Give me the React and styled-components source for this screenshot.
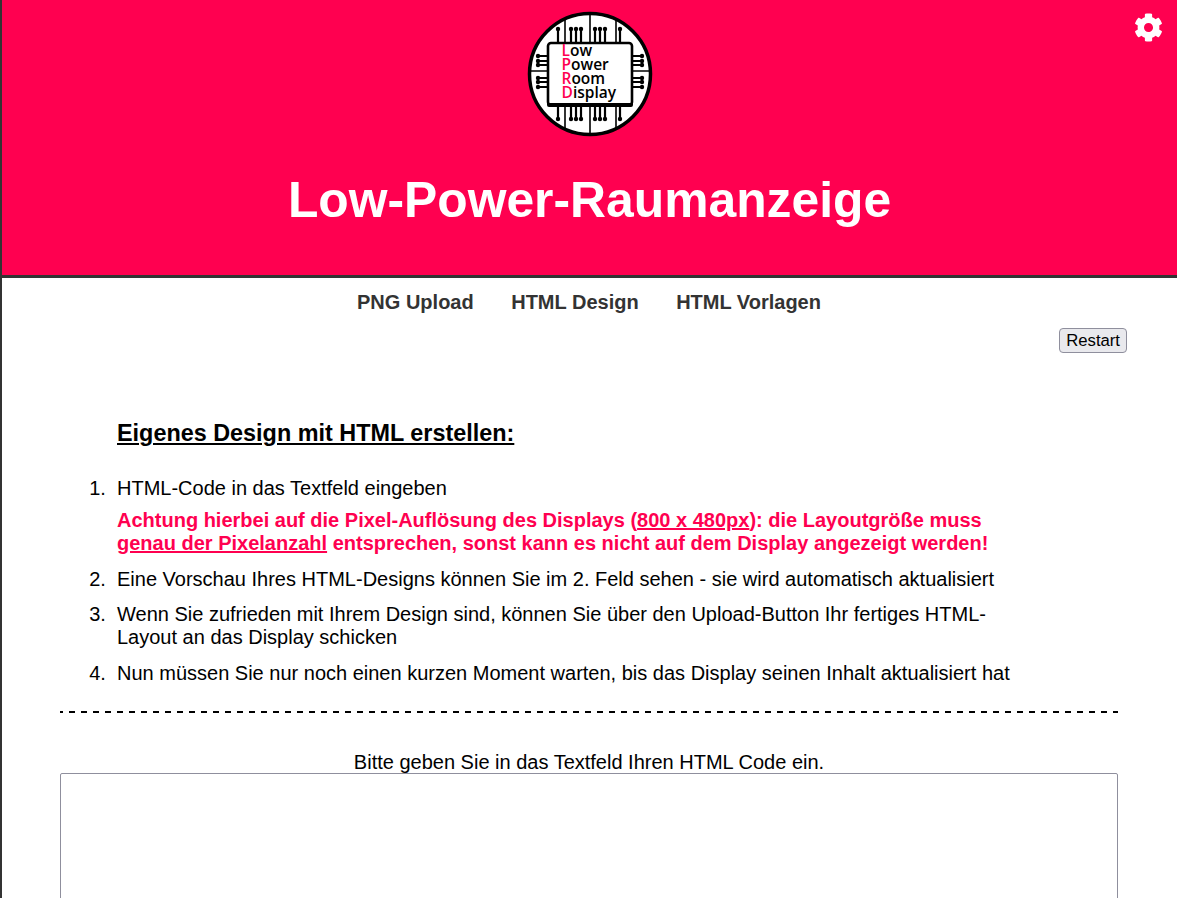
import React from 'react';
import styled, { createGlobalStyle } from 'styled-components';
import { FaCog } from 'react-icons/fa';

const GlobalStyle = createGlobalStyle`
  html, body {
    margin: 0;
    padding: 0;
    height: 100%;
    overflow: hidden;
    background: #fff;
  }
  body {
    font-family: "Liberation Sans", Arial, sans-serif;
    color: #000;
  }
`;

const Page = styled.div`
  border-left: 2px solid #333;
  min-height: 898px;
`;

const Header = styled.header`
  position: relative;
  height: 264px;
  background: #ff0050;
  border-bottom: 3px solid #333;
  display: flex;
  flex-direction: column;
  align-items: center;
  padding-top: 11px;
`;

const LogoWrap = styled.div`
  position: relative;
  width: 126px;
  height: 126px;
  flex: none;
`;

const LogoLabel = styled.div`
  position: absolute;
  left: 35px;
  top: 32px;
  font-family: "Open Sans", "Noto Sans", sans-serif;
  font-size: 15.5px;
  line-height: 14px;
  font-weight: 600;
  color: #000;
  white-space: nowrap;
`;

const LogoInitial = styled.span`
  color: #ff0050;
`;

const Title = styled.h1`
  margin: 36px 0 0;
  font-size: 49.8px;
  line-height: 55px;
  font-weight: bold;
  color: #fff;
`;

const SettingsButton = styled.div`
  position: absolute;
  top: 13px;
  right: 14px;
  color: #fff;
  font-size: 29px;
  line-height: 0;
`;

const Nav = styled.nav`
  display: flex;
  justify-content: center;
  gap: 37.5px;
  padding: 13px 1px 0 0;
`;

const NavLink = styled.a`
  font-size: 20px;
  line-height: 23px;
  font-weight: bold;
  color: #333;
`;

const RestartRow = styled.div`
  display: flex;
  justify-content: flex-end;
  padding: 14px 50px 0 0;
`;

const RestartButton = styled.button`
  font-family: "Liberation Sans", Arial, sans-serif;
  font-size: 16.7px;
  height: 25px;
  padding: 1px 6px;
  color: #000;
  background: #e9e9ed;
  border: 1px solid #8f8f9d;
  border-radius: 4px;
`;

const Content = styled.main`
  margin: 0 59px 0 58px;
`;

const Guide = styled.section`
  padding: 66px 0 14px 57px;
`;

const GuideTitle = styled.h2`
  margin: 0 0 30px;
  font-size: 23.4px;
  line-height: 28px;
  font-weight: bold;
  text-decoration: underline;
`;

const Steps = styled.ol`
  margin: 0;
  padding: 0;
  width: 905px;
  font-size: 20px;
  line-height: 23px;
`;

const Step = styled.li`
  margin-bottom: 12.5px;

  &::marker {
    content: counter(list-item) ".\\00a0\\00a0";
  }
`;

const Warning = styled.div`
  margin-top: 9px;
  color: #ff0050;
  font-weight: bold;
`;

const Divider = styled.hr`
  margin: 0;
  border: 0;
  height: 2px;
  background: linear-gradient(to right, #000 50%, transparent 50%) 9px 0 / 12px 2px repeat-x;
`;

const Prompt = styled.div`
  margin-top: 38px;
  text-align: center;
  font-size: 20px;
  line-height: 22px;
`;

const CodeField = styled.textarea`
  display: block;
  box-sizing: border-box;
  width: 100%;
  height: 400px;
  border: 1px solid #8f8f9d;
  border-radius: 2px;
  padding: 2px;
`;

const pinsTop = [-32, -19, -14, -9, 5, 10, 15, 30];
const pinsSide = [-18, -13, -9, 4, 8, 13];

// Platine mit Leiterbahnen, die Schrift liegt als echter Text darueber
const LogoBoard = () => (
  <svg width="126" height="126" viewBox="-63 -63 126 126">
    <circle cx="0" cy="0" r="60.5" fill="#fff" stroke="#000" strokeWidth="3.5" />
    <g stroke="#000" strokeWidth="1.6" fill="none">
      <path d="M-25 -56V-31M0 -60V-31M26 -56V-31M-25 56V31M0 60V31M26 56V31" />
      <path d="M-60 -3H-43M43 -3H60" />
    </g>
    <g stroke="#000" strokeWidth="2.2" fill="none">
      {pinsTop.map((x) => (
        <path key={x} d={`M${x} -44V-31M${x} 31V44`} />
      ))}
      {pinsSide.map((y) => (
        <path key={y} d={`M-51 ${y}H-43M43 ${y}H51`} />
      ))}
    </g>
    <g fill="#000">
      {pinsTop.map((x) => (
        <React.Fragment key={x}>
          <circle cx={x} cy="-45" r="2.2" />
          <circle cx={x} cy="45" r="2.2" />
        </React.Fragment>
      ))}
      {pinsSide.map((y) => (
        <React.Fragment key={y}>
          <circle cx="-52" cy={y} r="2.2" />
          <circle cx="52" cy={y} r="2.2" />
        </React.Fragment>
      ))}
    </g>
    <rect x="-42" y="-31" width="84" height="62" rx="3" fill="#fff" stroke="#000" strokeWidth="2.6" />
    <path d="M-43 29H43V31Q43 33 41 33H-41Q-43 33 -43 31Z" fill="#000" />
  </svg>
);

const Logo = () => (
  <LogoWrap>
    <LogoBoard />
    <LogoLabel>
      <div><LogoInitial>L</LogoInitial>ow</div>
      <div><LogoInitial>P</LogoInitial>ower</div>
      <div><LogoInitial>R</LogoInitial>oom</div>
      <div><LogoInitial>D</LogoInitial>isplay</div>
    </LogoLabel>
  </LogoWrap>
);

const App = () => (
  <Page>
    <GlobalStyle />
    <Header>
      <Logo />
      <Title>Low-Power-Raumanzeige</Title>
      <SettingsButton><FaCog /></SettingsButton>
    </Header>
    <Nav>
      <NavLink>PNG Upload</NavLink>
      <NavLink>HTML Design</NavLink>
      <NavLink>HTML Vorlagen</NavLink>
    </Nav>
    <RestartRow>
      <RestartButton>Restart</RestartButton>
    </RestartRow>
    <Content>
      <Guide>
        <GuideTitle>Eigenes Design mit HTML erstellen:</GuideTitle>
        <Steps>
          <Step>
            HTML-Code in das Textfeld eingeben
            <Warning>
              Achtung hierbei auf die Pixel-Auflösung des Displays (<u>800 x 480px</u>): die Layoutgröße muss{' '}
              <u>genau der Pixelanzahl</u> entsprechen, sonst kann es nicht auf dem Display angezeigt werden!
            </Warning>
          </Step>
          <Step>Eine Vorschau Ihres HTML-Designs können Sie im 2. Feld sehen - sie wird automatisch aktualisiert</Step>
          <Step>Wenn Sie zufrieden mit Ihrem Design sind, können Sie über den Upload-Button Ihr fertiges HTML-Layout an das Display schicken</Step>
          <Step>Nun müssen Sie nur noch einen kurzen Moment warten, bis das Display seinen Inhalt aktualisiert hat</Step>
        </Steps>
      </Guide>
      <Divider />
      <Prompt>Bitte geben Sie in das Textfeld Ihren HTML Code ein.</Prompt>
      <CodeField />
    </Content>
  </Page>
);

export default App;
